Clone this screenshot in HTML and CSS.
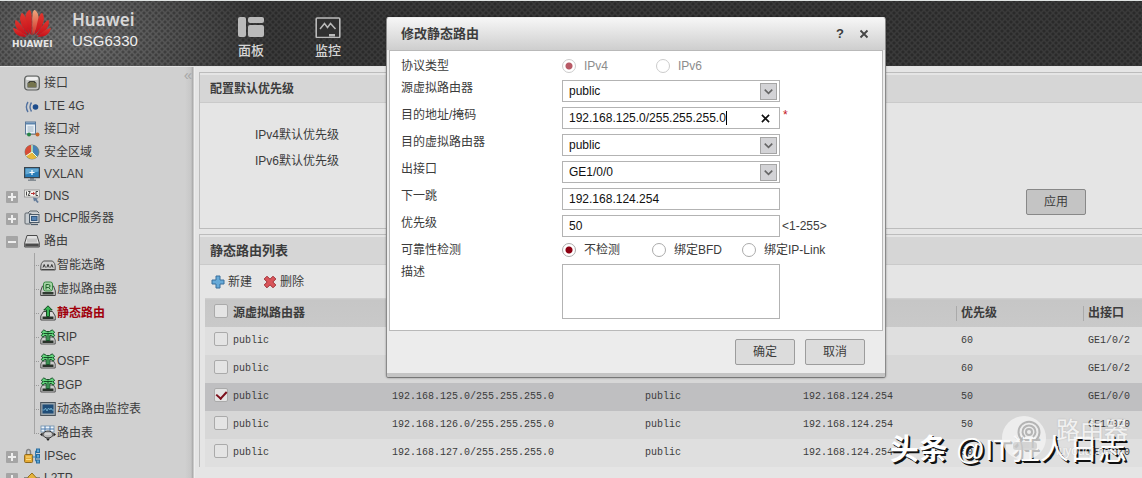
FILE: index.html
```html
<!DOCTYPE html>
<html lang="zh-CN">
<head>
<meta charset="utf-8">
<title>USG6330</title>
<link rel="stylesheet" href="styles.css">
</head>
<body>
<svg class="defs" aria-hidden="true">
  <symbol id="i-port" viewBox="0 0 16 16"><rect x=".7" y="1" width="14.6" height="14" rx="3" fill="#c4c6c3" stroke="#5a5d5c" stroke-width="1.2"/><rect x="2" y="2" width="12" height="3" rx="1.5" fill="#efefef"/><path d="M3.500 12.500V8l2-2h5l2 2v4.500z" fill="#40423a"/><path d="M5 8v4M7 7v5M9 7v5M11 8v4" stroke="#b6b267" stroke-width=".9"/></symbol>
  <symbol id="i-lte" viewBox="0 0 16 16"><circle cx="11.5" cy="9" r="2.8" fill="#1c4c8c"/><path d="M7.5 4.5Q4.5 9 7.5 13.500M4 4Q.8 9 4 14" fill="none" stroke="#5272a0" stroke-width="1.4"/></symbol>
  <symbol id="i-pair" viewBox="0 0 16 16"><rect x="1.500" y="1" width="10" height="12" fill="#e9f0f6" stroke="#5b7899"/><path d="M2 2.500h9" stroke="#5e86ae" stroke-width="2"/><path d="M3.500 6h6M3.500 8h6M3.500 10h6" stroke="#8aa3bd" stroke-width=".8"/><path d="M5 13.500h8" stroke="#888"/><circle cx="5" cy="13.500" r="2" fill="#268444"/><circle cx="13.500" cy="13.500" r="2" fill="#c5672c"/></symbol>
  <symbol id="i-zone" viewBox="0 0 16 16"><circle cx="8" cy="8" r="7" fill="#76b64f" stroke="#6c7675" stroke-width=".8"/><path d="M7 8V1A7 7 0 0 0 2 11.500z" fill="#d84c38"/><path d="M7.500 8 2.200 11.800A7 7 0 0 0 12.500 13.500z" fill="#e7b83b"/><path d="M8.500 7.500V1a7 7 0 0 1 4.500 11.500z" fill="#4682b8"/><path d="M8 1v7L2 12M8 8l5 5" stroke="#fff" stroke-width=".9" fill="none"/></symbol>
  <symbol id="i-vx" viewBox="0 0 16 16"><path d="M6 11h4v2.500h2V15H4v-1.500h2z" fill="#858d94"/><rect x=".6" y="1.600" width="14.800" height="10" fill="#2b7db7" stroke="#39434c" stroke-width="1.200"/><path d="M1.500 2.500h13v3l-13 3z" fill="#65a9d3"/><path d="M8 4v5M5.500 6.500h5" stroke="#fff" stroke-width="1.200"/></symbol>
  <symbol id="i-dns" viewBox="0 0 16 16"><rect x=".5" y="2" width="15" height="7" fill="#f1f1ed" stroke="#8e8e8e" stroke-width=".8"/><path d="M2.500 3.500v4M4.200 3.500h2L4.200 7.500h2M14 3.500h-2v4h2" stroke="#333" stroke-width=".9" fill="none"/><path d="M7 5.500h3" stroke="#b62f2f"/><path d="M9 3.700 11.300 5.500 9 7.300z" fill="#b62f2f"/><path d="M9 9.500l5 1-1.200 1.200 2 2.300-1.500 1-2-2.500-1.300 1z" fill="#647c9a"/></symbol>
  <symbol id="i-dhcp" viewBox="0 0 16 16"><rect x="1" y="3" width="6" height="11" rx="1" fill="#c8cdd1" stroke="#5e666d"/><path d="M4 3 6 1h7l2 2" fill="#c8cdd1" stroke="#5e666d"/><rect x="5.500" y="4.500" width="9.500" height="8" fill="#d5dade" stroke="#4c5b69"/><rect x="7.500" y="6.500" width="5.500" height="4" fill="#5483b5" stroke="#31567e"/><path d="M7 14.500h7" stroke="#4c5b69" stroke-width="1.200"/></symbol>
  <symbol id="i-route" viewBox="0 0 16 16"><path d="M3 2.500h10l2.300 7.500v4H.7v-4z" fill="#e2e2e2" stroke="#4b4b4b"/><path d="M1.200 10.500h13.600v3H1.200z" fill="#4b4b4b"/><path d="M4 5.500v4M6 5.500v4M8 5.500v4M10 5.500v4M12 5.500v4" stroke="#aaa"/></symbol>
  <symbol id="i-smart" viewBox="0 0 16 16"><path d="M3.500 4h9q2.700 2.200 2.700 5v4H.8V9q0-2.800 2.700-5z" fill="#cfcfcf" stroke="#555"/><path d="M1.500 12.500h13" stroke="#444"/><path d="M3 10.500 4.200 7.500 5.400 10.500M6.800 10.500 8 7.500 9.200 10.500M10.600 10.500 11.800 7.500 13 10.500" stroke="#333" fill="none"/></symbol>
  <symbol id="i-vr" viewBox="0 0 16 16"><path d="M2.500 5h11l1.800 5v4.500H.7V10z" fill="#ccc" stroke="#444"/><path d="M2.500 11h11v2.500h-11z" fill="#303b32"/><rect x="3.500" y="1" width="9" height="9" rx="2" fill="#a6d2a6" stroke="#398a43"/><path d="M6 8.500v-5h2.500q1.500 0 1.500 1.500T8.500 6.500H6M8.500 6.500l2 2" fill="none" stroke="#23682c"/></symbol>
  <symbol id="i-static" viewBox="0 0 16 16"><path d="M3.500 6.500h9l2.700 4.500v4H.8v-4z" fill="#d8d8d8" stroke="#444"/><path d="M2.500 11.500h11V14h-11z" fill="#29322a"/><path d="M8 .8 12.200 5H9.500v6.500h-3V5H3.800z" fill="#39b556" stroke="#154c22"/></symbol>
  <symbol id="i-dyn" viewBox="0 0 16 16"><path d="M2.500 8h11l1.700 3v4H.8v-4z" fill="#ccc" stroke="#555"/><path d="M2.500 11.500h11V14h-11z" fill="#29322a"/><path d="M6.200 11.500V6.500H4.500L3 8.300 1.200 6.300 3 4.800 1.300 3.300 3.800.9 6.500 2.500h3L12.200.9l2.500 2.400L13 4.800l1.800 1.500L13 8.300 11.500 6.500H9.800v5z" fill="#63d47c" stroke="#17542a"/><path d="M8 3.500v8M3.500 4.500h9" stroke="#154d26"/></symbol>
  <symbol id="i-mon" viewBox="0 0 16 16"><rect x=".7" y="1.500" width="14.600" height="13" fill="#9ba6ad" stroke="#4a535a"/><rect x="2.500" y="3.500" width="11" height="9" fill="#1f4d78"/><path d="M2.500 9h2l1-2 1.500 3 1.500-3 1.500 2 1-2 1 2h2" fill="none" stroke="#7abbd9" stroke-width=".8"/></symbol>
  <symbol id="i-rtable" viewBox="0 0 16 16"><rect x="1" y="1" width="13" height="6" fill="#eff5fa" stroke="#6a8dac" stroke-width=".8"/><path d="M1 4h13M5 1v6M10 1v6" stroke="#4a79aa"/><ellipse cx="8" cy="9.500" rx="5" ry="3.500" fill="#bbb" stroke="#333"/><path d="M5 9h6" stroke="#eee"/><path d="M0 9.500 2.500 7.500v4zM16 9.500 13.500 7.500v4zM8 16l-2-2.500h4z" fill="#222"/></symbol>
  <symbol id="i-ipsec" viewBox="0 0 16 16"><path d="M2.500 7V4.500q0-3 2-3t2 3V7" fill="none" stroke="#858585" stroke-width="1.500"/><rect x=".6" y="6.500" width="8" height="8" rx="1" fill="#e6ac35" stroke="#8f681e"/><path d="M2 9h5M2 11.500h5" stroke="#fbdb83"/><path d="M8.500 9h3M13 3h-1.500v10H13" stroke="#347eb3" fill="none"/><rect x="12.500" y="1" width="3" height="3.500" fill="#5aa7d9" stroke="#2b6c9d"/><rect x="12.500" y="6.500" width="3" height="3.500" fill="#5aa7d9" stroke="#2b6c9d"/><rect x="12.500" y="12" width="3" height="3" fill="#5aa7d9" stroke="#2b6c9d"/></symbol>
  <symbol id="i-l2tp" viewBox="0 0 16 16"><path d="M0 8h16" stroke="#888" stroke-width="2"/><path d="M4 7 8 3l4.500 5L8 12 4 9z" fill="#e6b23b" stroke="#94711e"/></symbol>
  <symbol id="i-chev" viewBox="0 0 16 16"><path d="M4 6l4 4 4-4" fill="none" stroke="#666" stroke-width="1.700"/></symbol>
</svg>

<div class="app">
  <header class="topbar">
    <svg class="logo" viewBox="0 0 40 30" aria-hidden="true">
      <defs>
        <linearGradient id="petal" x1="0" y1="0" x2="0" y2="1"><stop offset="0" stop-color="#e0382f"/><stop offset="1" stop-color="#c60d18"/></linearGradient>
        <linearGradient id="shine" x1="0" y1="0" x2="0" y2="1"><stop offset="0" stop-color="#f0a67c"/><stop offset="1" stop-color="#cf2a24"/></linearGradient>
      </defs>
      <g fill="url(#petal)">
        <path d="M19 27C12 16 11 5 17 1c3 0 3 7 2.500 26z"/>
        <path d="M21 27C28 16 29 5 23 1c-3 0-3 7-2.500 26z" fill="url(#shine)"/>
        <path d="M17.500 27C7 18 6 9 9.500 4 14 6 14 15 17.500 27z"/>
        <path d="M22.500 27C33 18 34 9 30.500 4 26 6 26 15 22.500 27z"/>
        <path d="M16 27.500C5 24 1 17 3 11c5 3 8 9 13 16.500z"/>
        <path d="M24 27.500C35 24 39 17 37 11c-5 3-8 9-13 16.500z"/>
        <path d="M14.500 28.500C6 30 1 25 .5 19.500 6 21 10 25 14.500 28.500z"/>
        <path d="M25.500 28.500C34 30 39 25 39.500 19.500 34 21 30 25 25.500 28.500z"/>
      </g>
    </svg>
    <div class="logo-name">HUAWEI</div>
    <div class="product"><strong>Huawei</strong><span>USG6330</span></div>
    <nav class="nav">
      <a class="nav-item" href="#">
        <svg viewBox="0 0 26 21" aria-hidden="true"><g fill="#bababa"><rect x="0" y="0" width="8" height="20" rx="2"/><rect x="10" y="0" width="16" height="6" rx="2"/><rect x="10" y="8" width="16" height="12" rx="2"/></g></svg>
        面板</a>
      <a class="nav-item" href="#">
        <svg viewBox="0 0 26 21" aria-hidden="true"><rect x="1.200" y="1" width="23.600" height="19.500" rx="1" fill="#303030" stroke="#bababa" stroke-width="1.600"/><path d="M5 12l4.500-5.500 3 4 3-4 5 5.500" fill="none" stroke="#bababa" stroke-width="1.500"/><rect x="14" y="17" width="6" height="2.500" fill="#bababa"/></svg>
        监控</a>
    </nav>
  </header>

  <div class="body">
    <aside class="side">
      <button class="collapse" aria-label="收起">«</button>
      <ul class="tree">
        <li class="leaf"><svg><use href="#i-port"/></svg>接口</li>
        <li class="leaf"><svg><use href="#i-lte"/></svg>LTE 4G</li>
        <li class="leaf"><svg><use href="#i-pair"/></svg>接口对</li>
        <li class="leaf"><svg><use href="#i-zone"/></svg>安全区域</li>
        <li class="group"><svg><use href="#i-vx"/></svg>VXLAN</li>
        <li class="group plus"><svg><use href="#i-dns"/></svg>DNS</li>
        <li class="group plus"><svg><use href="#i-dhcp"/></svg>DHCP服务器</li>
        <li class="group open minus"><svg><use href="#i-route"/></svg>路由</li>
        <li>
          <ul class="sub">
            <li><svg><use href="#i-smart"/></svg>智能选路</li>
            <li><svg><use href="#i-vr"/></svg>虚拟路由器</li>
            <li class="current"><svg><use href="#i-static"/></svg>静态路由</li>
            <li><svg><use href="#i-dyn"/></svg>RIP</li>
            <li><svg><use href="#i-dyn"/></svg>OSPF</li>
            <li><svg><use href="#i-dyn"/></svg>BGP</li>
            <li><svg><use href="#i-mon"/></svg>动态路由监控表</li>
            <li><svg><use href="#i-rtable"/></svg>路由表</li>
          </ul>
        </li>
        <li class="group plus"><svg><use href="#i-ipsec"/></svg>IPSec</li>
        <li class="group plus"><svg><use href="#i-l2tp"/></svg>L2TP</li>
      </ul>
    </aside>

    <main class="main">
      <section class="panel">
        <h2>配置默认优先级</h2>
        <div class="defaults">
          <div>IPv4默认优先级</div>
          <div>IPv6默认优先级</div>
          <button class="btn apply">应用</button>
        </div>
      </section>

      <section class="panel list">
        <h2>静态路由列表</h2>
        <div class="tools">
          <button><svg viewBox="0 0 14 14" aria-hidden="true"><path d="M5 1h4v4h4v4H9v4H5V9H1V5h4z" fill="#67aad8" stroke="#386e9c"/></svg>新建</button>
          <button><svg viewBox="0 0 14 14" aria-hidden="true"><path d="M4 1.200 7 4.200 10 1.200 12.800 4 9.800 7l3 3L10 12.800 7 9.800 4 12.800 1.200 10l3-3-3-3z" fill="#d9555a" stroke="#9f2f35"/></svg>删除</button>
        </div>
        <table class="routes">
          <colgroup><col class="c-check"><col class="c-src"><col class="c-dest"><col class="c-mid"><col class="c-mid"><col class="c-prio"><col></colgroup>
          <thead>
            <tr><th><input type="checkbox" aria-label="全选"></th><th>源虚拟路由器</th><th></th><th></th><th></th><th class="line">优先级</th><th class="line">出接口</th></tr>
          </thead>
          <tbody>
            <tr><td><input type="checkbox" aria-label="1"></td><td>public</td><td></td><td></td><td></td><td>60</td><td>GE1/0/2</td></tr>
            <tr class="alt"><td><input type="checkbox" aria-label="2"></td><td>public</td><td></td><td></td><td></td><td>60</td><td>GE1/0/2</td></tr>
            <tr class="selected"><td><input type="checkbox" aria-label="3" checked></td><td>public</td><td>192.168.125.0/255.255.255.0</td><td>public</td><td>192.168.124.254</td><td>50</td><td>GE1/0/0</td></tr>
            <tr class="alt"><td><input type="checkbox" aria-label="4"></td><td>public</td><td>192.168.126.0/255.255.255.0</td><td>public</td><td>192.168.124.254</td><td>50</td><td>GE1/0/0</td></tr>
            <tr><td><input type="checkbox" aria-label="5"></td><td>public</td><td>192.168.127.0/255.255.255.0</td><td>public</td><td>192.168.124.254</td><td>50</td><td>GE1/0/0</td></tr>
          </tbody>
        </table>
      </section>
    </main>
  </div>

  <form class="dialog" role="dialog" aria-labelledby="dlg-title">
    <div class="dialog-head">
      <h1 id="dlg-title">修改静态路由</h1>
      <button type="button" aria-label="帮助">?</button>
      <button type="button" aria-label="关闭"><svg viewBox="0 0 10 10"><path d="M1.500 1.500l7 7M8.500 1.500l-7 7" stroke="#444" stroke-width="1.800"/></svg></button>
    </div>
    <div class="dialog-body">
      <div class="row short"><span class="label">协议类型</span>
        <div class="radios wide"><label class="off"><input type="radio" name="proto" checked disabled>IPv4</label><label class="off"><input type="radio" name="proto" disabled>IPv6</label></div></div>
      <div class="row"><label class="label" for="src">源虚拟路由器</label>
        <div class="field"><select id="src"><option>public</option></select><svg class="arrow"><use href="#i-chev"/></svg></div></div>
      <div class="row"><label class="label" for="dest">目的地址/掩码</label>
        <div class="field"><input id="dest" type="text" value="192.168.125.0/255.255.255.0"><span class="caret"></span><svg class="clear" viewBox="0 0 10 10"><path d="M1 1l8 8M9 1l-8 8" stroke="#111" stroke-width="1.800"/></svg></div><span class="star">*</span></div>
      <div class="row"><label class="label" for="dvr">目的虚拟路由器</label>
        <div class="field"><select id="dvr"><option>public</option></select><svg class="arrow"><use href="#i-chev"/></svg></div></div>
      <div class="row"><label class="label" for="oif">出接口</label>
        <div class="field"><select id="oif"><option>GE1/0/0</option></select><svg class="arrow"><use href="#i-chev"/></svg></div></div>
      <div class="row"><label class="label" for="hop">下一跳</label>
        <div class="field"><input id="hop" type="text" value="192.168.124.254"></div></div>
      <div class="row"><label class="label" for="prio">优先级</label>
        <div class="field"><input id="prio" type="text" value="50"></div><span class="range">&lt;1-255&gt;</span></div>
      <div class="row short"><span class="label">可靠性检测</span>
        <div class="radios"><label><input type="radio" name="detect" checked>不检测</label><label><input type="radio" name="detect">绑定BFD</label><label><input type="radio" name="detect">绑定IP-Link</label></div></div>
      <div class="row"><label class="label" for="desc">描述</label>
        <div class="field"><textarea id="desc"></textarea></div></div>
    </div>
    <div class="dialog-foot"><button type="button" class="btn">确定</button><button type="button" class="btn">取消</button></div>
  </form>

  <div class="mark-author"><b>头条</b> @IT狂人日志</div>
  <div class="mark-site">
    <svg viewBox="0 0 44 44" aria-hidden="true"><circle cx="22" cy="22" r="22" fill="#f4f4f4" fill-opacity=".75"/><g fill="none" stroke="#b4b4b4" stroke-width="2"><circle cx="27" cy="16" r="3"/><path d="M23 21a6.500 6.500 0 1 1 8 0M20 24a10.500 10.500 0 1 1 14 0"/></g><rect x="11" y="26" width="24" height="8" rx="3" fill="#c8c8c8" fill-opacity=".7"/></svg>
    <div><span>路由器</span><small>luyouqi.com</small></div>
  </div>
</div>
</body>
</html>
```

FILE: styles.css
```css
* { box-sizing: border-box; }
body {
  margin: 0;
  overflow: hidden;
  font: 12px/16px "Liberation Sans", "Noto Sans CJK SC", sans-serif;
  color: #3c3c3c;
}
button, input, select, textarea { font: inherit; color: inherit; margin: 0; }
button { border: 0; background: none; padding: 0; }
ul { list-style: none; margin: 0; padding: 0; }
h1, h2 { margin: 0; font-size: 13px; line-height: 16px; font-weight: bold; }
.defs { position: absolute; width: 0; height: 0; }
.app { position: relative; display: flex; flex-direction: column; height: 100vh; overflow: hidden; }

.topbar {
  flex: none;
  display: grid;
  grid-template-columns: 64px 174px 1fr;
  grid-template-rows: 30px 12px;
  align-content: start;
  height: 66px;
  padding-top: 8px;
  border-top: 1px solid #dfe3e2;
  background:
    radial-gradient(circle, rgba(0,0,0,.28) 1px, transparent 2px) 0 0 / 6px 6px,
    radial-gradient(circle, rgba(0,0,0,.28) 1px, transparent 2px) 3px 3px / 6px 6px,
    radial-gradient(ellipse 190px 110px at 70px 36px, #727272, #585858 45%, #3a3a3a);
}
.logo { width: 40px; height: 29px; margin-left: 12px; }
.logo-name { grid-row: 2; padding-left: 12px; font: bold 9px/11px "DejaVu Sans", sans-serif; color: #e6e6e6; }
.product { grid-row: 1 / 3; grid-column: 2; padding-left: 8px; color: #ededed; }
.product strong, .product span { display: block; font-size: 15px; line-height: 20px; }
.product strong { font: 600 17px/22px "Noto Sans", sans-serif; color: #d8d8d8; }
.nav { grid-row: 1 / 3; grid-column: 3; display: flex; gap: 51px; padding-top: 8px; }
.nav-item { width: 26px; color: #d6d6d6; font-size: 13px; line-height: 18px; font-weight: 500; text-decoration: none; white-space: nowrap; }
.nav-item svg { display: block; width: 26px; height: 21px; margin-bottom: 4px; }

.body { flex: 1; display: flex; min-height: 0; border-top: 1px solid #e3e3e3; background: #e5e5e5; }
.side {
  position: relative;
  flex: none;
  width: 195px;
  padding-top: 4px;
  background: linear-gradient(to right, #d0d0d0 185px, #c7c7c7 191px, #a5a5a5 193px, #ededed 194px);
}
.collapse { position: absolute; top: 0; right: 3px; font-size: 15px; color: #a7a7a7; }
.tree li { white-space: nowrap; }
.leaf, .group { display: flex; align-items: center; padding-left: 24px; }
.leaf { height: 23px; }
.group { height: 22px; }
.group.open { height: 24px; }
.tree svg { flex: none; width: 16px; height: 16px; margin-right: 4px; }
.plus::before, .minus::before {
  content: "";
  width: 12px;
  height: 12px;
  margin: 1px 6px 0 -18px;
  border-radius: 1px;
  background: linear-gradient(#eee, #eee) center / 8px 2px no-repeat, #a5a5a5;
}
.plus::before { background: linear-gradient(#eee, #eee) center / 8px 2px no-repeat, linear-gradient(#eee, #eee) center / 2px 8px no-repeat, #a5a5a5; }
.sub { margin-left: 34px; background: linear-gradient(#a4a4a4, #a4a4a4) 0 0 / 1px 181px no-repeat; }
.sub li { display: flex; align-items: center; height: 24px; }
.sub li::before { content: ""; width: 5px; margin-right: 1px; border-top: 1px dotted #999; }
.sub svg { margin-right: 1px; }
.sub .current { color: #a0000c; font-weight: bold; }

.main { flex: 1; min-width: 0; padding: 5px 0 0 4px; }
.panel { border: 1px solid #bcbcbc; border-right: 0; }
.panel + .panel { margin-top: 5px; }
.panel h2 { height: 30px; padding: 6px 10px; border-top: 2px solid #e5e5e5; border-bottom: 1px solid #cacaca; background: #d6d6d6; font-size: 12px; }
.list h2 { font-size: 13px; }
.defaults { display: grid; grid-template-columns: 1fr auto; row-gap: 10px; padding: 24px 56px 13px 55px; }
.defaults > div { grid-column: 1 / 3; }
.defaults .btn { grid-column: 2; margin-top: 10px; }
.btn { width: 60px; height: 26px; border: 1px solid #9c9c9c; border-radius: 2px; background: #dcdcdc; padding-bottom: 1px; }
.btn.apply { background: #c4c4c4; border-color: #888; }
.list { border-bottom: 0; }
.tools { display: flex; gap: 11px; height: 33px; padding: 0 11px; }
.tools button { display: flex; align-items: center; gap: 3px; }
.tools svg { width: 14px; height: 14px; }
.routes { width: calc(100% - 5px); margin-left: 5px; table-layout: fixed; border-collapse: collapse; }
.c-check { width: 23px; }
.c-src { width: 159px; }
.c-dest { width: 253px; }
.c-mid { width: 158px; }
.c-prio { width: 127px; }
.routes th { height: 29px; padding: 0 0 0 5px; text-align: left; background: linear-gradient(#d2d2d2, #c6c6c6 2px, #c9c9c9); }
.routes th.line { background: linear-gradient(#aaa, #aaa) 0 8px / 1px 15px no-repeat, linear-gradient(#d2d2d2, #c6c6c6 2px, #c9c9c9); }
.routes td { height: 28px; padding: 0 0 0 5px; font: 10px/14px "Liberation Mono", monospace; white-space: nowrap; background: #dfdfdf; }
.routes .alt td { background: #d7d7d7; }
.routes .selected td { background: #bfbfc1; }
.routes th:first-child, .routes td:first-child { padding-left: 9px; }
.routes input {
  display: block;
  position: relative;
  appearance: none;
  width: 14px;
  height: 14px;
  margin-bottom: 4px;
  border: 1px solid #aaa;
  border-radius: 2px;
  background: #e4e4e4;
}
.routes input:checked::after {
  content: "";
  position: absolute;
  left: 3px;
  top: 0;
  width: 5px;
  height: 8px;
  border: solid #7c101c;
  border-width: 0 2px 2px 0;
  transform: rotate(42deg);
}

.dialog {
  position: absolute;
  left: 386px;
  top: 17px;
  width: 500px;
  border: 1px solid #8a8a8a;
  border-top-color: #eee;
  border-bottom: 1px solid #777;
  border-radius: 3px;
  background: #ececec;
  box-shadow: 0 0 2px rgba(0,0,0,.4);
  overflow: hidden;
}
.dialog-head { display: flex; align-items: center; gap: 15px; height: 32px; padding: 0 16px 0 14px; background: linear-gradient(#f6f6f6, #cecece); }
.dialog-head h1 { flex: 1; }
.dialog-head button { font-size: 13px; font-weight: bold; }
.dialog-head svg { display: block; width: 10px; height: 10px; }
.dialog-body { display: grid; row-gap: 5px; margin: 0 2px; padding: 7px 11px 11px; border: 1px solid #b9b9b9; background: #fff; }
.row { display: flex; align-items: flex-start; min-height: 22px; }
.row.short { min-height: 17px; }
.label { flex: none; width: 161px; }
.field { position: relative; width: 218px; }
.field input, .field select, .field textarea {
  display: block;
  width: 100%;
  height: 22px;
  padding: 0 6px;
  border: 1px solid #b3b3b3;
  border-radius: 0;
  background: #fff;
  color: #111;
  appearance: none;
  outline: 0;
}
.field textarea { height: 55px; resize: none; }
.arrow { position: absolute; right: 3px; top: 3px; width: 17px; height: 17px; border: 1px solid #a5a5a5; background: #d3d3d6; pointer-events: none; }
.clear { position: absolute; right: 10px; top: 7px; width: 9px; height: 9px; }
.caret { position: absolute; left: 164px; top: 4px; width: 1px; height: 14px; background: #000; }
.star { padding-left: 3px; color: #c4161c; }
.range { padding: 3px 0 0 2px; }
.radios { display: grid; grid-template-columns: 90px 90px auto; }
.radios.wide { grid-template-columns: 94px auto; }
.radios label { display: flex; align-items: center; white-space: nowrap; }
.radios input {
  appearance: none;
  width: 14px;
  height: 14px;
  margin-right: 8px;
  border: 1px solid #aaa;
  border-radius: 50%;
  background: #fff;
}
.radios input:checked { background: radial-gradient(circle, #8d0012 3px, #fff 4px); }
.radios .off { color: #8c8c8c; }
.radios .off input { border-color: #ccc; }
.radios .off input:checked { background: radial-gradient(circle, #b85a66 3px, #fff 4px); }
.dialog-foot { display: flex; justify-content: flex-end; gap: 10px; padding: 8px 20px; border-bottom: 4px solid #c4c4c4; }

.mark-author {
  position: absolute;
  right: 15px;
  bottom: 10px;
  font-size: 29px;
  line-height: 36px;
  color: #fff;
  text-shadow: 1px 1px 0 #111, 2px 2px 0 #111;
  white-space: nowrap;
}
.mark-site {
  position: absolute;
  right: 14px;
  bottom: 18px;
  display: flex;
  align-items: center;
  gap: 10px;
  color: rgba(255,255,255,.8);
  text-shadow: 0 0 2px rgba(0,0,0,.15);
}
.mark-site svg { width: 44px; height: 44px; }
.mark-site span, .mark-site small { display: block; }
.mark-site span { font-size: 24px; line-height: 26px; }
.mark-site small { font-size: 12px; line-height: 14px; }
```
